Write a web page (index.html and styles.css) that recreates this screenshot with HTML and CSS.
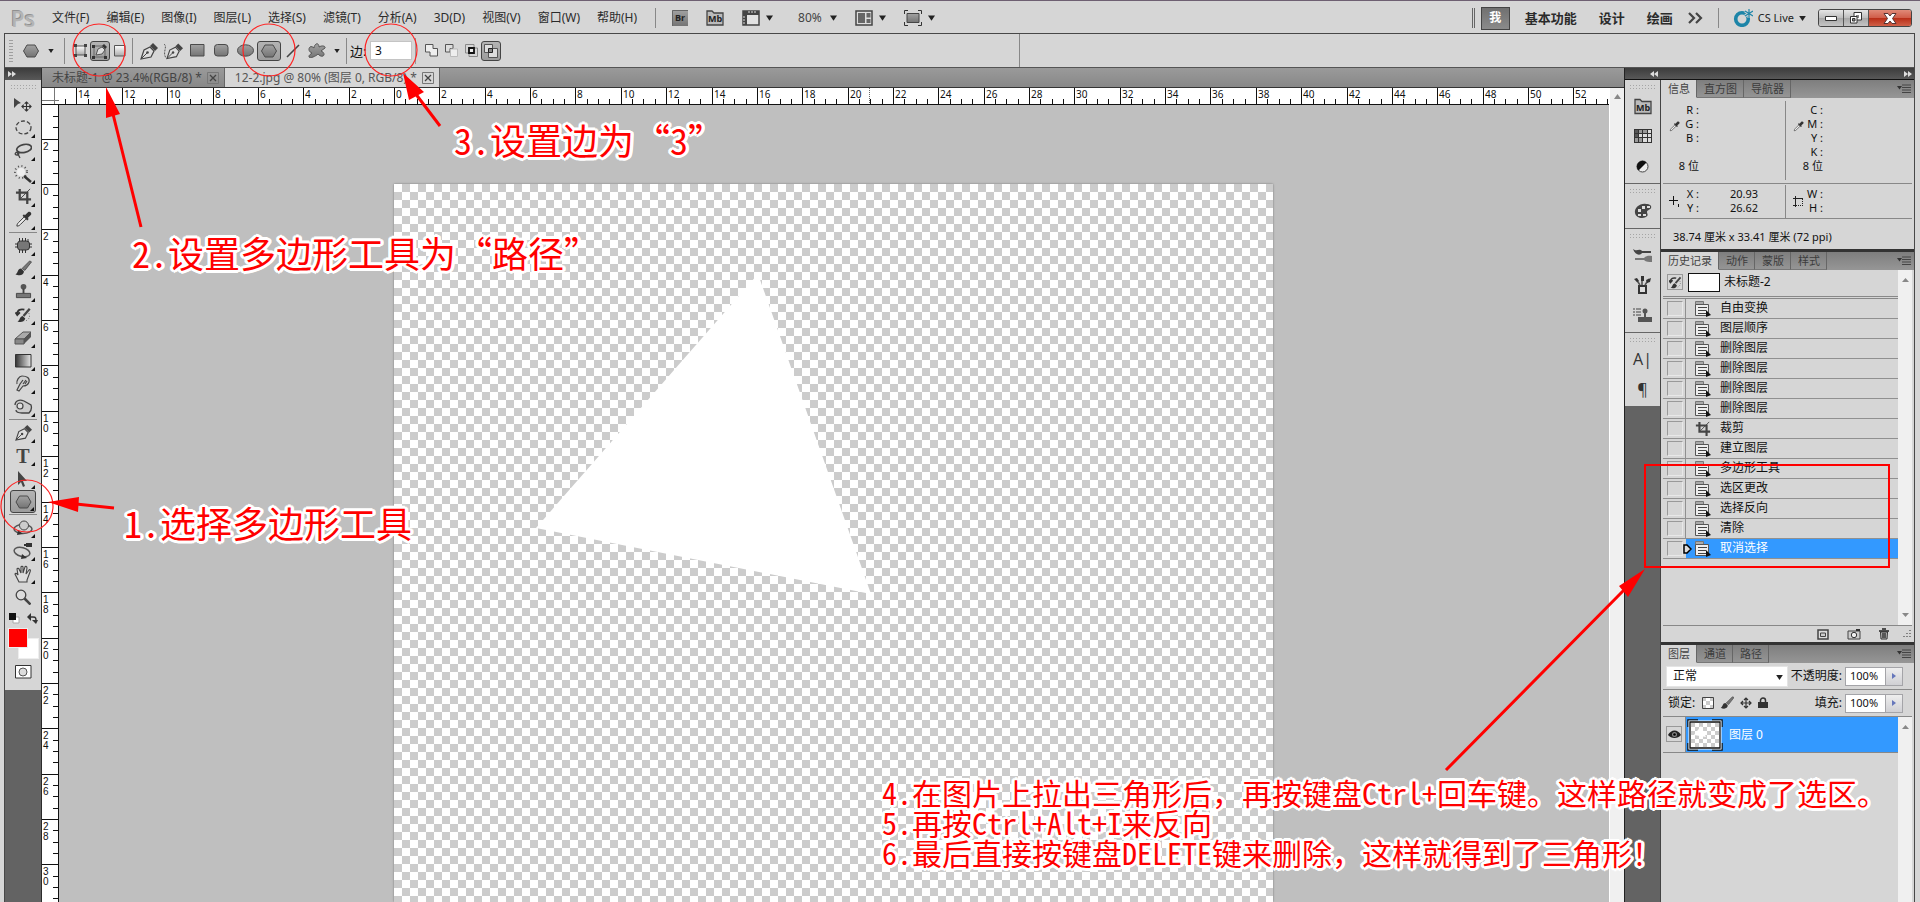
FILE: index.html
```html
<!DOCTYPE html>
<html lang="zh-CN">
<head>
<meta charset="utf-8">
<title>Photoshop</title>
<link rel="stylesheet" href="styles.css">
</head>
<body>
<svg class="defs" width="0" height="0" aria-hidden="true">
  <defs>
    <linearGradient id="metal" x1="0" y1="0" x2="0" y2="1"><stop offset="0" stop-color="#a2a2a2"/><stop offset="1" stop-color="#747474"/></linearGradient>
    <linearGradient id="fade" x1="0" y1="0" x2="1" y2="0"><stop offset="0" stop-color="#333"/><stop offset="1" stop-color="#e8e8e8"/></linearGradient>
    <linearGradient id="light" x1="0" y1="0" x2="0" y2="1"><stop offset="0" stop-color="#fff"/><stop offset="1" stop-color="#aaa"/></linearGradient>
    <symbol id="caret" viewBox="0 0 8 6"><path d="M0 0h8L4 6z" fill="#222"/></symbol>
    <symbol id="hex" viewBox="0 0 16 14"><path d="M4 1h8l3.500 6-3.500 6H4L.500 7z" fill="url(#metal)" stroke="#4a4a4a"/></symbol>
    <symbol id="pen" viewBox="0 0 18 18"><path d="M1 17L4 8l6-3 4 4-3 6z" fill="#ddd" stroke="#444" stroke-width="1.200"/><path d="M1 17l6-6" stroke="#444"/><circle cx="7.500" cy="10.500" r="1.300" fill="#444"/><path d="M10 4l3-3 5 5-3 3z" fill="#444"/></symbol>
    <symbol id="crop" viewBox="0 0 18 18"><path d="M5 1v11h12M1 5h12v12" fill="none" stroke="#444" stroke-width="2.400"/><path d="M6 11L16 1" stroke="#444"/></symbol>
    <symbol id="brush" viewBox="0 0 18 18"><path d="M1 15c3-1 2-6 6-6l3 3c0 5-6 5-9 3z" fill="#333"/><path d="M8 9l8-8 2 1-7 9z" fill="#777" stroke="#444" stroke-width=".800"/></symbol>
    <symbol id="stamp" viewBox="0 0 18 18"><circle cx="9" cy="4" r="3" fill="#555"/><path d="M8 6h2v5H8z" fill="#444"/><path d="M1.500 11h15v4.500h-15z" fill="#777" stroke="#444"/></symbol>
    <symbol id="dropper" viewBox="0 0 18 18"><path d="M2 16c0-2 1-3 2-4l6-6 2 2-6 6c-1 1-2 2-4 2z" fill="#eee" stroke="#333"/><path d="M8 5l5 5 1.500-1.500-1-1L17 4c1-2-1-4-3-3l-3.500 3.500-1-1z" fill="#333"/></symbol>
    <symbol id="move" viewBox="0 0 12 12"><path d="M6 1v10M1 6h10M4 3l2-2 2 2M4 9l2 2 2-2M3 4L1 6l2 2M9 4l2 2-2 2" fill="none" stroke="#333" stroke-width="1.200"/></symbol>
    <symbol id="state" viewBox="0 0 16 16"><path d="M.500.500h8v3h-8z" fill="#aaa" stroke="#777"/><path d="M.500 3.500h13v11H.500z" fill="#eee" stroke="#555"/><path d="M3 6.500h9M3 9.500h8M3 12.500h8" stroke="#444"/><path d="M11 9v7l5-2z" fill="#111"/></symbol>
    <symbol id="mb" viewBox="0 0 18 16"><path d="M1 3V1h5l2 2h9v12H1z" fill="#bbb" stroke="#444" stroke-width="1.300"/><text x="9" y="12" text-anchor="middle" class="badge-text">Mb</text></symbol>
    <symbol id="histbrush" viewBox="0 0 18 18"><path d="M2 8C2 3 6 2 10 3M0 6l2 3 3-3" fill="none" stroke="#333" stroke-width="2"/><path d="M15 7c2 4 0 8-5 9" fill="none" stroke="#555" stroke-dasharray="1 2"/><path d="M2 16c3 0 2-5 6-6l3 3c-1 4-6 5-9 3z" fill="#333"/><path d="M9 10l7-8" stroke="#444" stroke-width="2.600"/></symbol>
    <symbol id="menu" viewBox="0 0 14 10"><path d="M0 2h5L2.500 5.500z" fill="#333"/><path d="M5 1h9M5 3.500h9M5 6h9M5 8.500h9" stroke="#444"/></symbol>
    <symbol id="closebox" viewBox="0 0 12 12"><path d="M.500.500h11v11H.500z" fill="none" stroke="#777"/><path d="M3 3l6 6M9 3l-6 6" stroke="#444" stroke-width="1.300"/></symbol>
    <symbol id="dbl" viewBox="0 0 8 6"><path d="M0 0l4 3-4 3zM4 0l4 3-4 3z" fill="#ddd"/></symbol>
    <pattern id="chk" width="8" height="8" patternUnits="userSpaceOnUse"><path d="M0 0h8v8H0z" fill="#fff"/><path d="M0 0h4v4H0zM4 4h4v4H4z" fill="#ccc"/></pattern>
  </defs>
</svg>

<div class="app">
  <header class="menubar">
    <span class="logo">Ps</span>
    <nav class="menus">
      <a href="#">文件(F)</a><a href="#">编辑(E)</a><a href="#">图像(I)</a><a href="#">图层(L)</a><a href="#">选择(S)</a><a href="#">滤镜(T)</a><a href="#">分析(A)</a><a href="#">3D(D)</a><a href="#">视图(V)</a><a href="#">窗口(W)</a><a href="#">帮助(H)</a>
    </nav>
    <div class="apptools">
      <button type="button" aria-label="Bridge"><svg width="16" height="16"><path d="M0 0h16v16H0z" fill="url(#metal)"/><path d="M.500 16V.500H16" fill="none" stroke="#666"/><text x="8" y="11" text-anchor="middle" class="badge-text">Br</text></svg></button>
      <button type="button" aria-label="Mini Bridge"><svg width="18" height="16"><use href="#mb"/></svg></button>
      <button type="button" aria-label="查看额外内容"><svg width="18" height="16"><path d="M1 1h16v14H1z" fill="#e2e2e2" stroke="#444" stroke-width="1.500"/><path d="M1 1h16v4H5v10H1z" fill="#444"/><path d="M7 1v2M10 1v2M13 1v2M1 7h2M1 10h2M1 13h2" stroke="#ddd"/></svg><svg class="caret" width="7" height="6"><use href="#caret"/></svg></button>
      <button type="button" class="zoom">80%<svg class="caret" width="7" height="6"><use href="#caret"/></svg></button>
      <button type="button" aria-label="排列文档"><svg width="18" height="16"><path d="M1 1h16v14H1z" fill="#ddd" stroke="#444" stroke-width="1.500"/><path d="M3 3h7v10H3zM11.500 3h4v4.500h-4zM11.500 9h4v4h-4z" fill="#666"/></svg><svg class="caret" width="7" height="6"><use href="#caret"/></svg></button>
      <button type="button" aria-label="屏幕模式"><svg width="18" height="16"><path d="M.500 4V.500H4M14 .500h3.500V4M17.500 12v3.500H14M4 15.500H.500V12" fill="none" stroke="#333"/><path d="M3 3.500h12v9H3z" fill="url(#metal)" stroke="#444"/></svg><svg class="caret" width="7" height="6"><use href="#caret"/></svg></button>
    </div>
    <div class="workspaces">
      <button type="button" class="me">我</button>
      <button type="button">基本功能</button>
      <button type="button" class="wide">设计</button>
      <button type="button" class="wide">绘画</button>
      <button type="button" aria-label="更多工作区"><svg width="15" height="12"><path d="M1 1l5 5-5 5M8 1l5 5-5 5" fill="none" stroke="#444" stroke-width="2.200"/></svg></button>
    </div>
    <button type="button" class="cslive"><svg width="20" height="18"><circle cx="9" cy="10" r="6.300" fill="none" stroke="#1d85a8" stroke-width="3.600"/><path d="M16 0v9M12 2l8 5M20 2l-8 5" stroke="#d6d6d6" stroke-width="3"/><path d="M16 0v9M12 2l8 5M20 2l-8 5" stroke="#1d85a8" stroke-width="1.200"/></svg>CS Live<svg width="7" height="5"><use href="#caret"/></svg></button>
    <div class="winbtns">
      <button type="button" aria-label="最小化"><svg width="12" height="5"><path d="M.500.500h11v4H.500z" fill="#fff" stroke="#333"/></svg></button>
      <button type="button" aria-label="还原"><svg width="12" height="12"><path d="M4 .500h7.500V8H4z" fill="#fff" stroke="#333"/><path d="M6 3h3v3H6z" fill="#888"/><path d="M.500 4.500H7V11H.500z" fill="#fff" stroke="#333"/><path d="M2.500 6.500h2.500V9H2.500z" fill="#888" stroke="#333"/></svg></button>
      <button type="button" class="close" aria-label="关闭"><svg width="14" height="11"><path d="M1 .500h4L7 3l2-2.500h4L9.500 5.500l3.500 5H9L7 8l-2 2.500H1l3.500-5z" fill="#fff" stroke="#533"/></svg></button>
    </div>
  </header>

  <div class="frame">
    <div class="options">
      <span class="vgrip"></span>
      <button type="button" class="preset" aria-label="工具预设"><svg width="16" height="14"><use href="#hex"/></svg><svg width="6" height="4"><use href="#caret"/></svg></button>
      <div class="group modes">
        <button type="button" aria-label="形状图层"><svg width="13" height="13"><path d="M2 2h9v9H2z" fill="url(#light)" stroke="#555"/><path d="M0 0h3v3H0zM10 0h3v3h-3zM0 10h3v3H0zM10 10h3v3h-3z" fill="#444"/></svg></button>
        <button type="button" class="on" aria-label="路径"><svg width="16" height="16"><path d="M2 3h11v11H2z" fill="none" stroke="#666"/><path d="M0 2h3v3H0zM0 13h3v3H0zM12 13h3v3h-3z" fill="#333"/><path d="M4 12l2-6 4-2 3 3-3 4z" fill="#ddd" stroke="#555"/><path d="M10 3l2-2 3 3-2 2z" fill="#333"/></svg></button>
        <button type="button" aria-label="填充像素"><svg width="12" height="12"><path d="M.500.500h10.500v10.500H.500z" fill="url(#light)" stroke="#555"/></svg></button>
      </div>
      <div class="group shapes">
        <button type="button" aria-label="钢笔"><svg width="18" height="18"><use href="#pen"/></svg></button>
        <button type="button" aria-label="自由钢笔"><svg width="20" height="18"><path d="M1 2c4 3-2 8 2 14" fill="none" stroke="#555" stroke-dasharray="2 1"/><use href="#pen" x="3" y="0" width="17" height="18"/></svg></button>
        <button type="button" aria-label="矩形"><svg width="15" height="13"><path d="M.500.500h13.500v11.500H.500z" fill="url(#metal)" stroke="#4a4a4a"/></svg></button>
        <button type="button" aria-label="圆角矩形"><svg width="15" height="13"><rect x=".5" y=".5" width="13.500" height="11.500" rx="3" fill="url(#metal)" stroke="#4a4a4a"/></svg></button>
        <button type="button" aria-label="椭圆"><svg width="17" height="13"><ellipse cx="8.500" cy="6.500" rx="8" ry="5.700" fill="url(#metal)" stroke="#4a4a4a"/></svg></button>
        <button type="button" class="on" aria-label="多边形"><svg width="16" height="14"><use href="#hex"/></svg></button>
        <button type="button" aria-label="直线"><svg width="14" height="14"><path d="M1 13L13 1" stroke="#444" stroke-width="1.600"/></svg></button>
        <button type="button" aria-label="自定形状"><svg width="18" height="15"><path d="M8 1c2-1 3 1 3 3 3-2 7-1 6 1-1 1-3 2-4 3 3 1 4 4 2 5-2 1-4-1-5-2-2 2-8 5-9 3-.500-2 2-3 3-4C1 9 0 6 2 4c1-1 3 0 4 1 0-2 1-3 2-4z" fill="url(#metal)" stroke="#555"/></svg></button>
      </div>
      <svg class="shape-caret" width="6" height="4"><use href="#caret"/></svg>
      <div class="group sides"><label for="sides">边:</label><input id="sides" type="text" value="3"></div>
      <div class="group pathops">
        <button type="button" aria-label="添加"><svg width="13" height="13"><path d="M.500.500h7.500v4h4.500V12H5V8H.500z" fill="#eee" stroke="#555"/></svg></button>
        <button type="button" aria-label="减去"><svg width="13" height="13"><path d="M.500.500h7.500v4H5V8H.500z" fill="#ddd" stroke="#555"/><path d="M5.500 5h7v7.500h-7z" fill="#eee" stroke="#bbb"/></svg></button>
        <button type="button" aria-label="交叉"><svg width="13" height="13"><path d="M.500.500H9V9H.500zM4 4h8.500v8.500H4z" fill="none" stroke="#888"/><path d="M4 4h5v5H4z" fill="#eee" stroke="#111" stroke-width="1.800"/></svg></button>
        <button type="button" class="on" aria-label="排除"><svg width="14" height="14"><path d="M.500.500h8v4h5v9h-9v-5h-4z" fill="#ddd" stroke="#555"/><path d="M4.500 4.500h4v4h-4z" fill="#888" stroke="#222"/></svg></button>
      </div>
    </div>

    <div class="main">
      <aside class="toolbox">
        <div class="darkhead"><svg width="8" height="6"><use href="#dbl"/></svg></div>
        <div class="tools">
          <span class="hgrip"></span>
          <button type="button" aria-label="移动"><svg width="18" height="16"><path d="M0 1l7 5-3 1-4 4z" fill="#444"/><use href="#move" x="7" y="4" width="11" height="11"/></svg></button>
          <button type="button" class="more" aria-label="椭圆选框"><svg width="17" height="15"><ellipse cx="8.500" cy="7.500" rx="7.500" ry="6.500" fill="none" stroke="#444" stroke-width="1.300" stroke-dasharray="4 2"/></svg></button>
          <button type="button" class="more" aria-label="套索"><svg width="18" height="16"><ellipse cx="10" cy="5.500" rx="7.500" ry="4" fill="none" stroke="#444" stroke-width="1.700" transform="rotate(-12 10 5)"/><path d="M4 9c-3 0-4 3-1 3s2-4 0-3l3 6" fill="none" stroke="#444" stroke-width="1.300"/></svg></button>
          <button type="button" class="more" aria-label="魔棒"><svg width="18" height="18"><circle cx="7" cy="7" r="4" fill="#eee"/><circle cx="7" cy="7" r="6" fill="none" stroke="#555" stroke-width="2" stroke-dasharray="1 2.500"/><path d="M10 11l7 6" stroke="#333" stroke-width="2.500"/></svg></button>
          <button type="button" class="more" aria-label="裁剪"><svg width="17" height="17"><use href="#crop"/></svg></button>
          <button type="button" class="more" aria-label="吸管"><svg width="17" height="17"><use href="#dropper"/></svg></button>
          <hr>
          <button type="button" class="more" aria-label="修补"><svg width="17" height="15"><rect x="2.500" y="3" width="12" height="9" rx="3" fill="#777" stroke="#333"/><path d="M4.500 0v3M7.500 0v3M10.500 0v3M13 1v3M4.500 12v3M7.500 12v3M10.500 12v3M0 6h3M0 9h3M14 6h3M14 9h3" stroke="#333"/></svg></button>
          <button type="button" class="more" aria-label="画笔"><svg width="18" height="17"><use href="#brush"/></svg></button>
          <button type="button" class="more" aria-label="图章"><svg width="17" height="17"><use href="#stamp"/></svg></button>
          <button type="button" class="more" aria-label="历史画笔"><svg width="17" height="16"><use href="#histbrush"/></svg></button>
          <button type="button" class="more" aria-label="橡皮擦"><svg width="18" height="14"><path d="M1 8l8-7h8l-7 7z" fill="#aaa" stroke="#555"/><path d="M1 8h9v5H1z" fill="#888" stroke="#555"/><path d="M10 8l7-7v5l-7 7z" fill="#555"/></svg></button>
          <button type="button" class="more" aria-label="渐变"><svg width="17" height="14"><path d="M.500.500h15.500v12.500H.500z" fill="url(#fade)" stroke="#333"/></svg></button>
          <button type="button" class="more" aria-label="涂抹"><svg width="16" height="17"><path d="M2 9c-1-3 2-8 5-8 5 0 8 2 7 6-1 3-3 4-6 4l-4 5-2-1 3-6M5 9l3-4M8 9l3-4M10 9l2-3" fill="#d0d0d0" stroke="#444" stroke-width="1.200"/></svg></button>
          <button type="button" class="more" aria-label="海绵"><svg width="19" height="15"><path d="M1 6c0-4 4-6 9-4l7 4c1 3 0 6-2 8H8c-4 0-6-1-6-3" fill="#ccc" stroke="#444" stroke-width="1.300"/><circle cx="6" cy="7" r="3" fill="#ddd" stroke="#444" stroke-width="1.200"/></svg></button>
          <hr>
          <button type="button" class="more" aria-label="钢笔"><svg width="17" height="17"><use href="#pen"/></svg></button>
          <button type="button" class="more type-tool" aria-label="文字">T</button>
          <button type="button" class="more" aria-label="路径选择"><svg width="12" height="16"><path d="M1 0l9 10H6l2 5-2 1-2-5-3 3z" fill="#444"/></svg></button>
          <button type="button" class="more on" aria-label="多边形"><svg width="17" height="14"><use href="#hex"/></svg></button>
          <hr>
          <button type="button" class="more" aria-label="3D 对象"><svg width="20" height="16"><ellipse cx="10" cy="9" rx="9" ry="4.500" fill="none" stroke="#555" stroke-width="1.500"/><circle cx="11" cy="5.500" r="4.500" fill="#ccc" stroke="#444"/><path d="M5 10l5 4-6 1z" fill="#333"/></svg></button>
          <button type="button" class="more" aria-label="3D 相机"><svg width="20" height="18"><ellipse cx="9" cy="10" rx="8" ry="4.500" fill="none" stroke="#555" stroke-width="1.500" transform="rotate(15 9 10)"/><path d="M13 1h6v4h-6zM11 2h2v2h-2zM9 12l5 4-6 1z" fill="#333"/></svg></button>
          <button type="button" class="more" aria-label="抓手"><svg width="18" height="18"><path d="M5 17L1 9c0-1 2-1 3 1L3 4c0-1 2-1 2 0l2 4V2c0-1 2-1 2 0v6l2-6c0-1 2-1 2 1l-1 6 3-4c1-1 2 0 1 2l-3 8v2z" fill="#ddd" stroke="#444" stroke-width="1.100"/></svg></button>
          <button type="button" aria-label="缩放"><svg width="16" height="16"><circle cx="6" cy="6" r="4.800" fill="#ddd" stroke="#444" stroke-width="1.300"/><path d="M9.500 9.500l6 6" stroke="#444" stroke-width="2.500"/></svg></button>
          <div class="defaults">
            <svg width="11" height="11"><path d="M4 4h6v6H4z" fill="#fff" stroke="#aaa"/><path d="M0 0h7v7H0z" fill="#111"/></svg>
            <svg width="11" height="11"><path d="M2 4h4c3 0 3 1 3 5" fill="none" stroke="#333" stroke-width="1.500"/><path d="M0 4l4-4v8zM5 7h6l-2 4z" fill="#333"/></svg>
          </div>
          <div class="swatches"><button type="button" class="bg" aria-label="背景色"></button><button type="button" class="fg" aria-label="前景色"></button></div>
          <div class="mask"><svg width="17" height="14"><path d="M.500.500h15.500v12.500H.500z" fill="#fff" stroke="#333"/><circle cx="8" cy="7" r="4" fill="#ddd" stroke="#555"/></svg></div>
        </div>
      </aside>

      <main class="document">
        <div class="doctabs">
          <div class="doctab"><span>未标题-1 @ 23.4%(RGB/8) *</span><svg width="12" height="12"><use href="#closebox"/></svg></div>
          <div class="doctab current"><span>12-2.jpg @ 80% (图层 0, RGB/8) *</span><svg width="12" height="12"><use href="#closebox"/></svg></div>
        </div>
        <div class="view">
          <div class="viewcol">
            <div class="rulerrow"><span class="corner"></span><svg id="ruler-x" class="ruler-x"></svg></div>
            <div class="canvasrow">
              <svg id="ruler-y" class="ruler-y"></svg>
              <div class="stage"><div class="image"><svg width="340" height="330"><path d="M222 0L335 320 0 254z" fill="#fff"/></svg></div></div>
            </div>
          </div>
          <div class="vscroll"><svg width="7" height="5"><path d="M0 5l3.500-5L7 5z" fill="#888"/></svg></div>
        </div>
      </main>

      <aside class="right">
        <div class="darkhead"><svg class="flip" width="8" height="6"><use href="#dbl"/></svg><svg width="8" height="6"><use href="#dbl"/></svg></div>
        <div class="rightcols">
          <div class="dock">
            <div class="dockgroup">
              <span class="hgrip"></span>
              <button type="button" aria-label="Mini Bridge"><svg width="18" height="17"><use href="#mb"/></svg></button>
              <button type="button" aria-label="色板"><svg width="18" height="14"><path d="M0 0h18v14H0z" fill="#333"/><path d="M1 1h3v3H1zM1 5h3v3H1z" fill="#555"/><path d="M5 1h3v3H5zM9 1h4v3H9zM1 9h3v4H1zM5 9h3v4H5z" fill="#999"/><path d="M14 1h3v3h-3zM5 5h3v3H5zM9 5h4v3H9zM14 5h3v3h-3zM9 9h4v4H9zM14 9h3v4h-3z" fill="#ddd"/></svg></button>
              <button type="button" aria-label="调整"><svg width="13" height="13"><circle cx="6.500" cy="6.500" r="5.500" fill="#eee" stroke="#444"/><path d="M2.500 10.500A5.500 5.500 0 0 1 10.500 2.500z" fill="#111"/></svg></button>
            </div>
            <div class="dockgroup">
              <span class="hgrip"></span>
              <button type="button" class="tall" aria-label="颜色"><svg width="18" height="16"><path d="M1 10C0 5 6 0 12 1c4 0 6 2 5 4s-4 2-4 4 2 3-1 5c-4 2-10 1-11-4z" fill="#444"/><path d="M8 3h3v3H8zM13 3h3v2h-3zM4 6h3v3H4zM4 11h3v2H4zM9 11h3v2H9z" fill="#ddd"/></svg></button>
            </div>
            <div class="dockgroup">
              <span class="hgrip"></span>
              <button type="button" aria-label="画笔预设"><svg width="20" height="15"><path d="M0 1c4 3 6-1 9 2h9v2H9C7 8 2 7 0 1z" fill="#444"/><path d="M2 10h9c3-3 6-2 8-2v6c-3 0-6 0-8-2H2z" fill="#777"/></svg></button>
              <button type="button" aria-label="画笔"><svg width="17" height="18"><path d="M5 10h7v7H5z" fill="#ddd" stroke="#333" stroke-width="2"/><path d="M6 9L2 3M8 9V1M11 9l4-6" stroke="#555" stroke-width="1.600"/><path d="M0 3l3-1 2 3-2 1zM7 0h3v5H7zM12 4l5-2-1 4-3 1z" fill="#333"/></svg></button>
              <button type="button" aria-label="仿制源"><svg width="19" height="15"><path d="M0 1h2M3 1h5M0 4h2M3 4h5M0 7h2M3 7h5" stroke="#444"/><circle cx="12" cy="3" r="2.500" fill="#555"/><path d="M11 4h2v5h-2zM5 9h14v5H5z" fill="#555"/></svg></button>
            </div>
            <div class="dockgroup last">
              <span class="hgrip"></span>
              <button type="button" class="glyph" aria-label="字符">A|</button>
              <button type="button" class="glyph" aria-label="段落">¶</button>
            </div>
          </div>

          <div class="panels">
            <section class="panel">
              <div class="tabs"><button type="button" class="active">信息</button><button type="button">直方图</button><button type="button">导航器</button><svg width="14" height="10"><use href="#menu"/></svg></div>
              <div class="info">
                <div class="cell">
                  <svg width="11" height="11"><use href="#dropper"/></svg>
                  <div class="lines"><span>R :</span><span>G :</span><span>B :</span><span>&nbsp;</span><span>8 位</span></div>
                </div>
                <div class="cell">
                  <svg width="11" height="11"><use href="#dropper"/></svg>
                  <div class="lines"><span>C :</span><span>M :</span><span>Y :</span><span>K :</span><span>8 位</span></div>
                </div>
              </div>
              <div class="info coords">
                <div class="cell">
                  <svg width="11" height="11"><path d="M4.500 0v9M0 4.500h9M9.500 8v3" stroke="#111"/></svg>
                  <div class="lines"><span>X :</span><span>Y :</span></div>
                  <div class="nums"><span>20.93</span><span>26.62</span></div>
                </div>
                <div class="cell">
                  <svg width="11" height="11"><path d="M2.500 0v11M0 2.500h10M0 9.500h2" fill="none" stroke="#222"/><path d="M9.500 3v8M3 9.500h8" fill="none" stroke="#222" stroke-dasharray="1 1"/></svg>
                  <div class="lines"><span>W :</span><span>H :</span></div>
                </div>
              </div>
              <p class="docsize">38.74 厘米 x 33.41 厘米 (72 ppi)</p>
            </section>

            <section class="panel">
              <div class="tabs"><button type="button" class="active">历史记录</button><button type="button">动作</button><button type="button">蒙版</button><button type="button">样式</button><svg width="14" height="10"><use href="#menu"/></svg></div>
              <div class="scrollarea history">
                <div class="content">
                  <div class="snapshot"><span class="box"><svg width="13" height="13"><use href="#histbrush"/></svg></span><span class="thumb"></span><span>未标题-2</span></div>
                  <ul class="states">
                    <li><i></i><svg width="16" height="16"><use href="#state"/></svg><span>自由变换</span></li>
                    <li><i></i><svg width="16" height="16"><use href="#state"/></svg><span>图层顺序</span></li>
                    <li><i></i><svg width="16" height="16"><use href="#state"/></svg><span>删除图层</span></li>
                    <li><i></i><svg width="16" height="16"><use href="#state"/></svg><span>删除图层</span></li>
                    <li><i></i><svg width="16" height="16"><use href="#state"/></svg><span>删除图层</span></li>
                    <li><i></i><svg width="16" height="16"><use href="#state"/></svg><span>删除图层</span></li>
                    <li><i></i><svg width="16" height="16"><use href="#crop"/></svg><span>裁剪</span></li>
                    <li><i></i><svg width="16" height="16"><use href="#state"/></svg><span>建立图层</span></li>
                    <li><i></i><svg width="16" height="16"><use href="#state"/></svg><span>多边形工具</span></li>
                    <li><i></i><svg width="16" height="16"><use href="#state"/></svg><span>选区更改</span></li>
                    <li><i></i><svg width="16" height="16"><use href="#state"/></svg><span>选择反向</span></li>
                    <li><i></i><svg width="16" height="16"><use href="#state"/></svg><span>清除</span></li>
                    <li class="sel"><i></i><svg class="marker" width="9" height="10"><path d="M1 1h3l4 4-4 4H1z" fill="#ddd" stroke="#000" stroke-width="1.500"/></svg><svg width="16" height="16"><use href="#state"/></svg><span>取消选择</span></li>
                  </ul>
                </div>
                <div class="bar"><svg width="7" height="4"><path d="M0 4l3.500-4L7 4z" fill="#888"/></svg><svg width="7" height="4"><path d="M0 0h7L3.500 4z" fill="#888"/></svg></div>
              </div>
              <div class="footer">
                <button type="button" aria-label="新建文档"><svg width="12" height="11"><path d="M1 1h10v9H1z" fill="#ddd" stroke="#444" stroke-width="1.500"/><path d="M3.500 4h5v3.500h-5z" fill="#ccc" stroke="#444"/></svg></button>
                <button type="button" aria-label="新建快照"><svg width="14" height="11"><path d="M1 2h12v8H1z" fill="#ccc" stroke="#444"/><circle cx="7" cy="6" r="2.700" fill="#eee" stroke="#333"/><path d="M9 1h4" stroke="#333" stroke-width="2"/></svg></button>
                <button type="button" aria-label="删除"><svg width="10" height="12"><path d="M1.500 4h7L8 11H2z" fill="#bbb" stroke="#333"/><path d="M0 3h10M3 1h4M4 5v5M6 5v5" stroke="#222" stroke-width="1.300"/></svg></button>
                <svg width="10" height="10"><path d="M9 1v1M9 4v1M6 4v1M9 7v1M6 7v1M3 7v1" stroke="#666" stroke-width="1.500"/></svg>
              </div>
            </section>

            <section class="panel layers">
              <div class="tabs"><button type="button" class="active">图层</button><button type="button">通道</button><button type="button">路径</button><svg width="14" height="10"><use href="#menu"/></svg></div>
              <div class="row">
                <div class="blend"><select aria-label="混合模式"><option>正常</option></select><svg width="7" height="5"><use href="#caret"/></svg></div>
                <label for="opacity">不透明度:</label>
                <span class="spin"><input id="opacity" type="text" value="100%"><button type="button" aria-label="不透明度滑块"><svg width="4" height="6"><path d="M0 0l4 3-4 3z" fill="#67b"/></svg></button></span>
              </div>
              <div class="row">
                <span class="lock">锁定:</span>
                <div class="locks">
                  <svg width="12" height="12"><path d="M.500.500h11v11H.500z" fill="url(#chk)" stroke="#444"/></svg>
                  <svg width="14" height="14"><use href="#brush"/></svg>
                  <svg width="12" height="12"><use href="#move"/></svg>
                  <svg width="10" height="12"><path d="M2.500 5V3.500a2.500 2.500 0 0 1 5 0V5" fill="none" stroke="#333" stroke-width="1.500"/><path d="M0 5h10v6H0z" fill="#333"/></svg>
                </div>
                <label for="fill">填充:</label>
                <span class="spin"><input id="fill" type="text" value="100%"><button type="button" aria-label="填充滑块"><svg width="4" height="6"><path d="M0 0l4 3-4 3z" fill="#67b"/></svg></button></span>
              </div>
              <div class="scrollarea">
                <div class="content">
                  <div class="layer">
                    <button type="button" class="eye" aria-label="显示图层"><svg width="13" height="9"><path d="M0 5c3-6 10-6 13 0-3 4-10 4-13 0z" fill="#222"/><circle cx="6.500" cy="4.500" r="2.500" fill="#888"/><circle cx="6.500" cy="4.500" r="1.300" fill="#000"/></svg></button>
                    <div class="layerbody"><svg width="36" height="32"><path d="M1 8V1h10M25 1h10v7M35 24v7H25M11 31H1v-7" fill="none" stroke="#111" stroke-width="1.500"/><path d="M2.500 2.500h31v27h-31z" fill="url(#chk)" stroke="#fff" stroke-width="2"/><path d="M3 3h30v26H3z" fill="none" stroke="#111" stroke-width="1.300"/><path d="M14 7l5 11-12-2z" fill="#fff"/></svg><span>图层 0</span></div>
                  </div>
                </div>
                <div class="bar"><svg width="7" height="4"><path d="M0 4l3.500-4L7 4z" fill="#888"/></svg></div>
              </div>
            </section>
          </div>
        </div>
      </aside>
    </div>
  </div>

  <svg class="marks" width="1920" height="902" aria-hidden="true">
    <g fill="none" stroke="#f22" stroke-width="1.200"><circle cx="99" cy="50" r="26"/><circle cx="269" cy="50" r="26"/><circle cx="391" cy="50" r="26"/><circle cx="27" cy="506" r="26"/></g>
    <path d="M1645 465h244v102h-244z" fill="none" stroke="#f00" stroke-width="2"/>
    <g stroke="#f00" stroke-width="3"><path d="M114 508L76 504M141 227L113 114M440 126L415 93M1446 770L1624 590"/></g>
    <path d="M48 502l31-5-1 15zM106 87l14 27-14 4zM403 73l21 19-15 8zM1645 569l-26 17 9 11z" fill="#f00"/>
  </svg>
  <p class="note n1"><span>1.</span>选择多边形工具</p>
  <p class="note n2"><span>2.</span>设置多边形工具为“路径”</p>
  <p class="note n3"><span>3.</span>设置边为“<span>3</span>”</p>
  <div class="note n4">
    <p><span>4.</span>在图片上拉出三角形后，再按键盘<span>Ctrl+</span>回车键。这样路径就变成了选区。</p>
    <p><span>5.</span>再按<span>Ctrl+Alt+I</span>来反向</p>
    <p><span>6.</span>最后直接按键盘<span>DELETE</span>键来删除，这样就得到了三角形！</p>
  </div>
</div>
<script src="script.js"></script>
</body>
</html>
```

FILE: styles.css
```css
* { box-sizing: border-box; }
body {
  margin: 0;
  background: #d6d6d6;
  color: #111;
  font: 12px/14px "Noto Sans", "Noto Sans CJK SC", sans-serif;
}
p, ul { margin: 0; padding: 0; list-style: none; }
svg { display: block; flex: none; }
.defs { position: absolute; }
button, input, select { font: inherit; color: inherit; }
button {
  display: flex; align-items: center; justify-content: center;
  padding: 0; border: 0; background: none;
}
.badge-text { font: bold 9px "Open Sans", sans-serif; fill: #222; }

.app {
  position: relative; display: flex; flex-direction: column;
  height: 100vh; overflow: hidden;
  border-top: 1px solid #6e6072;
}

/* menu bar */
.menubar { display: flex; align-items: center; height: 32px; padding: 2px 8px 0 11px; flex: none; }
.logo { width: 41px; font: 600 22px/26px "Open Sans", sans-serif; color: #b4b4b4; text-shadow: -1px -1px 0 #909090; }
.menus { display: flex; gap: 17px; }
.menus a { color: #2b2b2b; text-decoration: none; white-space: nowrap; }
.apptools { display: flex; align-items: center; gap: 18px; height: 20px; margin-left: 18px; padding-left: 16px; border-left: 1px solid #888; }
.apptools button { gap: 6px; }
.apptools .zoom { gap: 8px; padding-left: 7px; color: #444; }
.workspaces { display: flex; align-items: center; margin-left: auto; padding-left: 6px; border-left: 3px double #666; height: 20px; font-size: 13px; font-weight: bold; color: #2b2b2b; }
.workspaces button { margin-left: 15px; }
.workspaces .wide { margin-left: 22px; }
.workspaces .me { width: 29px; height: 23px; margin: 0; background: linear-gradient(#707070, #8b8b8b); border: 1px solid #444; color: #fff; font-size: 12px; }
.cslive { gap: 5px; height: 20px; margin-left: 15px; padding-left: 14px; border-left: 1px solid #888; color: #222; font-size: 11px; white-space: nowrap; }
.winbtns { display: flex; margin-left: 12px; border: 1px solid #444; border-radius: 3px; overflow: hidden; }
.winbtns button { width: 25px; height: 16px; background: linear-gradient(#e6e6e6, #bdbdbd 50%, #a6a6a6 50%, #c4c4c4); border-right: 1px solid #555; }
.winbtns .close { width: 42px; border: 0; background: linear-gradient(#e08a78, #d05c48 50%, #b82c16 50%, #d06048); }

.frame { flex: 1; min-height: 0; display: flex; flex-direction: column; margin: 0 5px 0 4px; border: 1px solid #484848; border-bottom: 0; }

/* options bar */
.options { display: flex; align-items: center; height: 34px; flex: none; padding-left: 4px; border-bottom: 1px solid #555; background: linear-gradient(90deg, transparent 1014px, #888 1014px, #888 1015px, transparent 1015px) 0 0 no-repeat; }
.vgrip { width: 4px; height: 24px; background: radial-gradient(circle, #888 1px, transparent 1px) 0 0 / 2px 3px; opacity: .7; }
.hgrip { display: block; width: 27px; height: 5px; flex: none; background: radial-gradient(circle, #999 1px, transparent 1px) 0 0 / 3px 3px; opacity: .8; }
.preset { gap: 9px; margin: 0 10px; }
.group { display: flex; align-items: center; height: 26px; border-left: 1px solid #888; }
.modes { width: 68px; padding: 0 2px 0 5px; }
.modes button, .pathops button { width: 20px; height: 20px; }
.shapes { padding-left: 4px; }
.shapes button { width: 24px; height: 20px; }
.options .on, .tools .on { border: 1px solid #444; border-radius: 3px; background: linear-gradient(#b4b4b4, #9c9c9c); }
.shape-caret { margin: 0 6px 0 5px; }
.sides { width: 70px; padding-left: 3px; border-right: 1px solid #999; white-space: nowrap; }
.sides label { width: 20px; flex: none; font-size: 13px; line-height: 20px; }
.sides input { width: 42px; height: 19px; padding: 0 4px; border: 1px solid #c4c4c4; background: #fff; }
.pathops { padding-left: 5px; border: 0; }

.main { flex: 1; min-height: 0; display: flex; }
.darkhead { display: flex; align-items: center; height: 12px; flex: none; background: linear-gradient(#3c3c3c, #585858); }

/* toolbox */
.toolbox { width: 37px; flex: none; background: #636363; border-right: 1px solid #2b2b2b; }
.toolbox .darkhead { padding-left: 3px; }
.tools { display: flex; flex-direction: column; align-items: center; padding: 4px 0 11px; background: #d6d6d6; }
.tools .hgrip { margin-bottom: 4px; }
.tools button { position: relative; width: 26px; height: 23px; flex: none; }
.tools .more::after { content: ""; position: absolute; right: 1px; bottom: 1px; border: 2px solid #111; border-top-color: transparent; border-left-color: transparent; }
.tools hr { width: 28px; height: 1px; margin: 1px 0; border: 0; background: #888; flex: none; }
.tools .type-tool { font: bold 20px/22px "Liberation Serif", serif; color: #444; }
.defaults { display: flex; gap: 7px; height: 20px; align-items: center; }
.swatches { display: grid; grid-template: 10px 21px / 10px 21px; width: 31px; }
.tools .swatches button { width: auto; height: auto; border: 1px solid #eee; }
.tools .swatches .fg { position: relative; grid-area: 1 / 1 / 3 / 3; width: 20px; height: 20px; background: #f00; }
.tools .swatches .bg { grid-area: 2 / 2; width: 21px; height: 21px; background: #fff; }
.mask { margin-top: 6px; }

/* document */
.document { flex: 1; min-width: 0; display: flex; flex-direction: column; }
.doctabs { display: flex; height: 20px; flex: none; background: linear-gradient(#9a9a9a, #888); border-bottom: 1px solid #333; }
.doctab { display: flex; align-items: center; gap: 5px; padding: 0 5px 0 10px; color: #444; border-right: 1px solid #666; white-space: nowrap; }
.doctab.current { background: #d6d6d6; color: #555; }
.view { flex: 1; min-height: 0; display: flex; }
.viewcol { flex: 1; min-width: 0; display: flex; flex-direction: column; }
.rulerrow { display: flex; height: 17px; flex: none; background: #fff; border-bottom: 1px solid #111; }
.corner { width: 17px; flex: none; background: linear-gradient(90deg, transparent 12px, #777 12px, #777 13px, transparent 13px), linear-gradient(transparent 12px, #777 12px, #777 13px, transparent 13px); }
.ruler-x { flex: 1; min-width: 0; height: 16px; }
.canvasrow { flex: 1; min-height: 0; display: flex; }
.ruler-y { width: 17px; height: 100%; background: #fff; border-right: 1px solid #111; }
.ruler-x text { font: 10px "Noto Sans", sans-serif; fill: #111; }
.ruler-y text { font: 10px "Liberation Sans", sans-serif; fill: #111; }
.stage { position: relative; flex: 1; min-width: 0; overflow: hidden; background: #bfbfbf; }
.image {
  position: absolute; left: 335px; top: 79px; width: 879px; bottom: 0;
  background: repeating-conic-gradient(#ccc 0 25%, #fff 0 50%) 0 0 / 16px 16px;
  box-shadow: 0 0 2px #777;
}
.image svg { position: absolute; left: 142px; top: 90px; }
.vscroll { width: 15px; flex: none; display: flex; justify-content: center; padding-top: 6px; background: #f0f0f0; border-left: 1px solid #fff; }

/* right side */
.right { width: 290px; flex: none; display: flex; flex-direction: column; border-left: 1px solid #222; }
.right .darkhead { justify-content: space-between; padding: 0 2px 0 25px; border-bottom: 1px solid #111; }
.flip { transform: scaleX(-1); }
.rightcols { flex: 1; min-height: 0; display: flex; }
.dock { width: 36px; flex: none; background: #636363; border-right: 1px solid #444; }
.dockgroup { display: flex; flex-direction: column; align-items: center; padding: 4px 0 2px; background: #d6d6d6; border-bottom: 1px solid #666; }
.dockgroup button { width: 30px; height: 30px; }
.dockgroup .tall { height: 31px; }
.dockgroup .hgrip { margin-bottom: 2px; }
.dockgroup.last { border-bottom: 0; }
.glyph { font: 16px/20px "Open Sans", sans-serif; color: #333; }
.panels { flex: 1; min-width: 0; display: flex; flex-direction: column; background: #d6d6d6; }
.panel + .panel { border-top: 3px solid #333; }
.tabs { display: flex; align-items: stretch; height: 18px; background: linear-gradient(#7e7e7e, #969696); font-size: 11px; }
.tabs button { padding: 0 6px 0 7px; border-right: 1px solid #666; border-bottom: 1px solid #777; color: #3c3c3c; }
.tabs .active { background: #d6d6d6; border-bottom-color: #d6d6d6; color: #444; }
.tabs svg { margin: 4px 3px 0 auto; }
.info { display: grid; grid-template-columns: 123px 1fr; height: 86px; margin: 0 2px; padding: 3px 0; border-bottom: 1px solid #888; font-size: 11px; }
.cell { display: flex; padding: 0 0 0 6px; border-right: 1px solid #888; }
.cell:last-child { border-right: 0; padding-left: 7px; }
.cell > svg { margin-top: 20px; }
.lines, .nums { display: flex; flex-direction: column; align-items: flex-end; width: 19px; padding-top: 2px; line-height: 14px; white-space: nowrap; }
.nums { width: 59px; }
.coords { height: 35px; padding: 1px 0 0; }
.coords .cell > svg { margin-top: 11px; }
.docsize { padding: 11px 12px 5px; height: 30px; font-size: 11px; }
.scrollarea { display: flex; margin: 0 2px; }
.content { flex: 1; min-width: 0; }
.bar { display: flex; flex-direction: column; align-items: center; justify-content: space-between; width: 14px; padding: 8px 0; background: #f0f0f0; }
.history { height: 356px; border-bottom: 1px solid #888; }
.snapshot { display: flex; align-items: center; height: 29px; padding: 0 0 2px 4px; border-bottom: 3px double #888; }
.snapshot .box { display: flex; align-items: center; justify-content: center; width: 16px; height: 16px; border: 1px solid #999; }
.thumb { width: 32px; height: 19px; margin: 0 4px 0 5px; background: #fff; border: 1px solid #111; }
.states li { position: relative; display: flex; align-items: center; height: 20px; border-bottom: 1px solid #909090; background: linear-gradient(#909090, #909090) 22px 0 / 1px 100% no-repeat; }
.states i { width: 16px; height: 15px; margin: 0 12px 0 4px; border: 1px solid #999; border-right-color: #e8e8e8; border-bottom-color: #e8e8e8; }
.states span { margin: 0 0 2px 9px; }
.states .sel { background: linear-gradient(90deg, #d6d6d6 23px, #39f 23px); color: #fff; }
.marker { position: absolute; left: 20px; top: 5px; }
.footer { display: flex; align-items: center; justify-content: flex-end; gap: 18px; height: 16px; padding-right: 3px; }
.footer > svg { margin-left: -6px; }
.panel.layers { flex: 1; min-height: 0; display: flex; flex-direction: column; }
.row { display: flex; align-items: center; height: 27px; margin: 0 2px; padding: 0 2px 0 3px; border-bottom: 1px solid #888; white-space: nowrap; }
.blend { position: relative; width: 122px; height: 21px; }
.blend select { width: 100%; height: 100%; padding: 0 6px; appearance: none; border: 1px solid #e4e4e4; border-radius: 0; background: #fff; }
.blend svg { position: absolute; right: 5px; top: 9px; }
.row label { margin: 0 3px 0 auto; }
.spin { display: flex; height: 19px; margin-right: 7px; border: 1px solid #a4a4a8; }
.spin input { width: 40px; padding: 0 4px; border: 0; border-right: 1px solid #a4a4a8; background: #fff; font-size: 11px; }
.spin button { width: 16px; background: linear-gradient(#eee, #d0d0d4); }
.lock { margin-left: 2px; }
.locks { display: flex; align-items: center; gap: 6px; margin-left: 7px; }
.layers .scrollarea { flex: 1; min-height: 0; }
.layer { display: flex; height: 36px; border-bottom: 1px solid #888; }
.eye { width: 16px; height: 16px; margin: 9px 3px 0 3px; border: 1px solid #999; }
.layerbody { flex: 1; display: flex; align-items: center; gap: 6px; padding-left: 1px; border-left: 1px solid #888; background: #39f; color: #fff; }

/* annotations laid over the window */
.marks { position: absolute; left: 0; top: -1px; pointer-events: none; }
.note {
  position: absolute; margin: 0; color: #f00; white-space: nowrap;
  font: 36px/36px "Noto Sans CJK SC", sans-serif;
  text-shadow: 3px 0 #fff, -3px 0 #fff, 0 3px #fff, 0 -3px #fff, 2px 2px #fff, -2px 2px #fff, 2px -2px #fff, -2px -2px #fff, 3px 1px #fff, -3px 1px #fff, 3px -1px #fff, -3px -1px #fff;
}
.note span { font-family: "Noto Sans Mono CJK SC", "Liberation Mono", monospace; line-height: 0; }
.n1 { left: 124px; top: 503px; }
.n2 { left: 132px; top: 233px; }
.n3 { left: 454px; top: 120px; }
.n4 { left: 882px; top: 776px; font-size: 30px; line-height: 30px; }
```

FILE: script.js
```js
// Draws the centimetre rulers: 80% zoom at 72 ppi gives 22.68 px per centimetre.
const STEP = 22.68 / 2;
const NS = "http://www.w3.org/2000/svg";

function add(svg, name, attrs, text) {
  const el = document.createElementNS(NS, name);
  for (const key in attrs) el.setAttribute(key, attrs[key]);
  if (text !== undefined) el.textContent = text;
  svg.appendChild(el);
}

function drawRuler(svg, origin, length, vertical) {
  const first = Math.ceil(-origin / STEP);
  for (let i = first; origin + i * STEP < length; i++) {
    const p = Math.round(origin + i * STEP);
    const major = i % 4 === 0;
    const size = major ? 16 : 5;
    add(svg, "rect", vertical
      ? { x: 16 - size, y: p, width: size, height: 1, fill: "#111" }
      : { x: p, y: 16 - size, width: 1, height: size, fill: "#111" });
    if (!major) continue;
    const label = String(Math.abs(i / 2));
    if (vertical) {
      [...label].forEach((digit, n) => add(svg, "text", { x: 1, y: p + 11 + n * 10 }, digit));
    } else {
      add(svg, "text", { x: p + 2, y: 10 }, label);
    }
  }
}

const rx = document.getElementById("ruler-x");
const ry = document.getElementById("ruler-y");
drawRuler(rx, 335, rx.getBoundingClientRect().width, false);
drawRuler(ry, 79, ry.getBoundingClientRect().height, true);
add(rx, "path", { d: "M810.5 0v16", stroke: "#666", "stroke-dasharray": "1 1" });
```
